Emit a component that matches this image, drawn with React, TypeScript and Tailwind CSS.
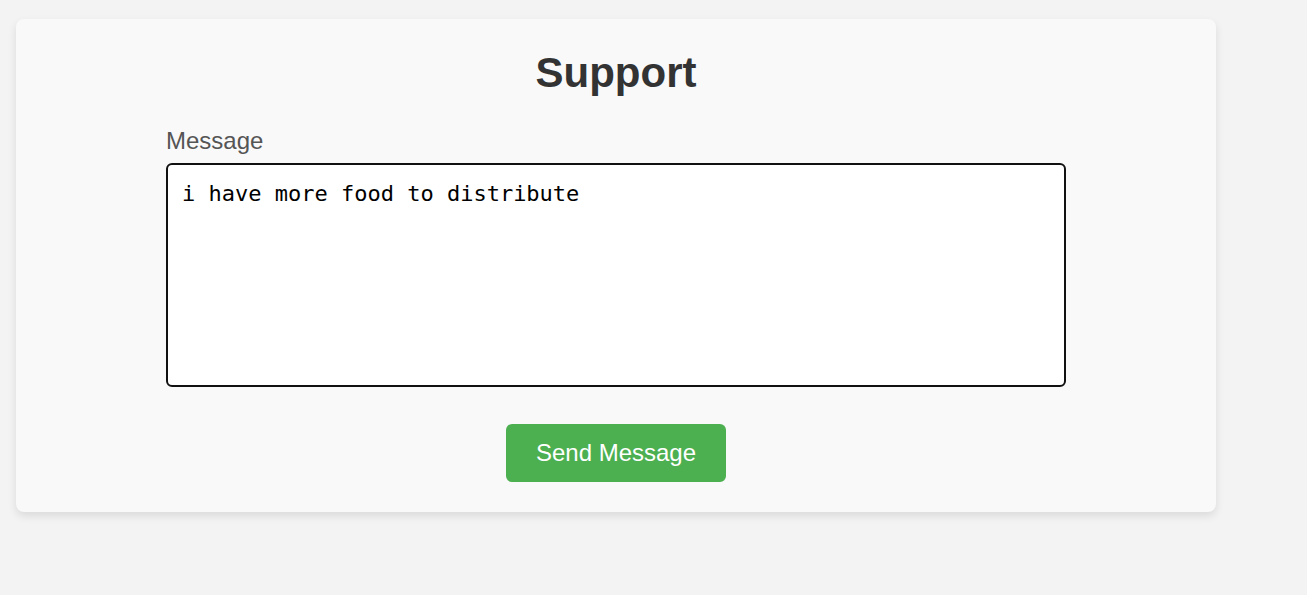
export default function App() {
  return (
    <div className="min-h-screen bg-[#f3f3f3] pt-[19px] px-4 font-['Liberation_Sans',Arial,sans-serif]">
      <div className="w-[1200px] rounded-lg bg-[#f9f9f9] shadow-[0_4px_8px_rgba(0,0,0,0.1)] pt-[31px] pb-[30px]">
        <h1 className="text-center text-[42px] leading-[46px] font-bold text-[#333]">Support</h1>
        <div className="mx-auto w-[900px] mt-[31px]">
          <label className="block text-[24px] leading-[28px] text-[#555]">Message</label>
          <textarea
            defaultValue="i have more food to distribute"
            className="mt-[8px] block w-full h-[224px] resize-none rounded-md border-2 border-[#111] bg-white px-[14px] py-[14px] font-['DejaVu_Sans_Mono','Liberation_Mono',monospace] text-[22px] leading-[30px] text-black outline-none"
          />
        </div>
        <div className="mt-[37px] flex justify-center">
          <button className="h-[58px] w-[220px] rounded-md bg-[#4caf50] text-[24px] text-white">
            Send Message
          </button>
        </div>
      </div>
    </div>
  );
}
